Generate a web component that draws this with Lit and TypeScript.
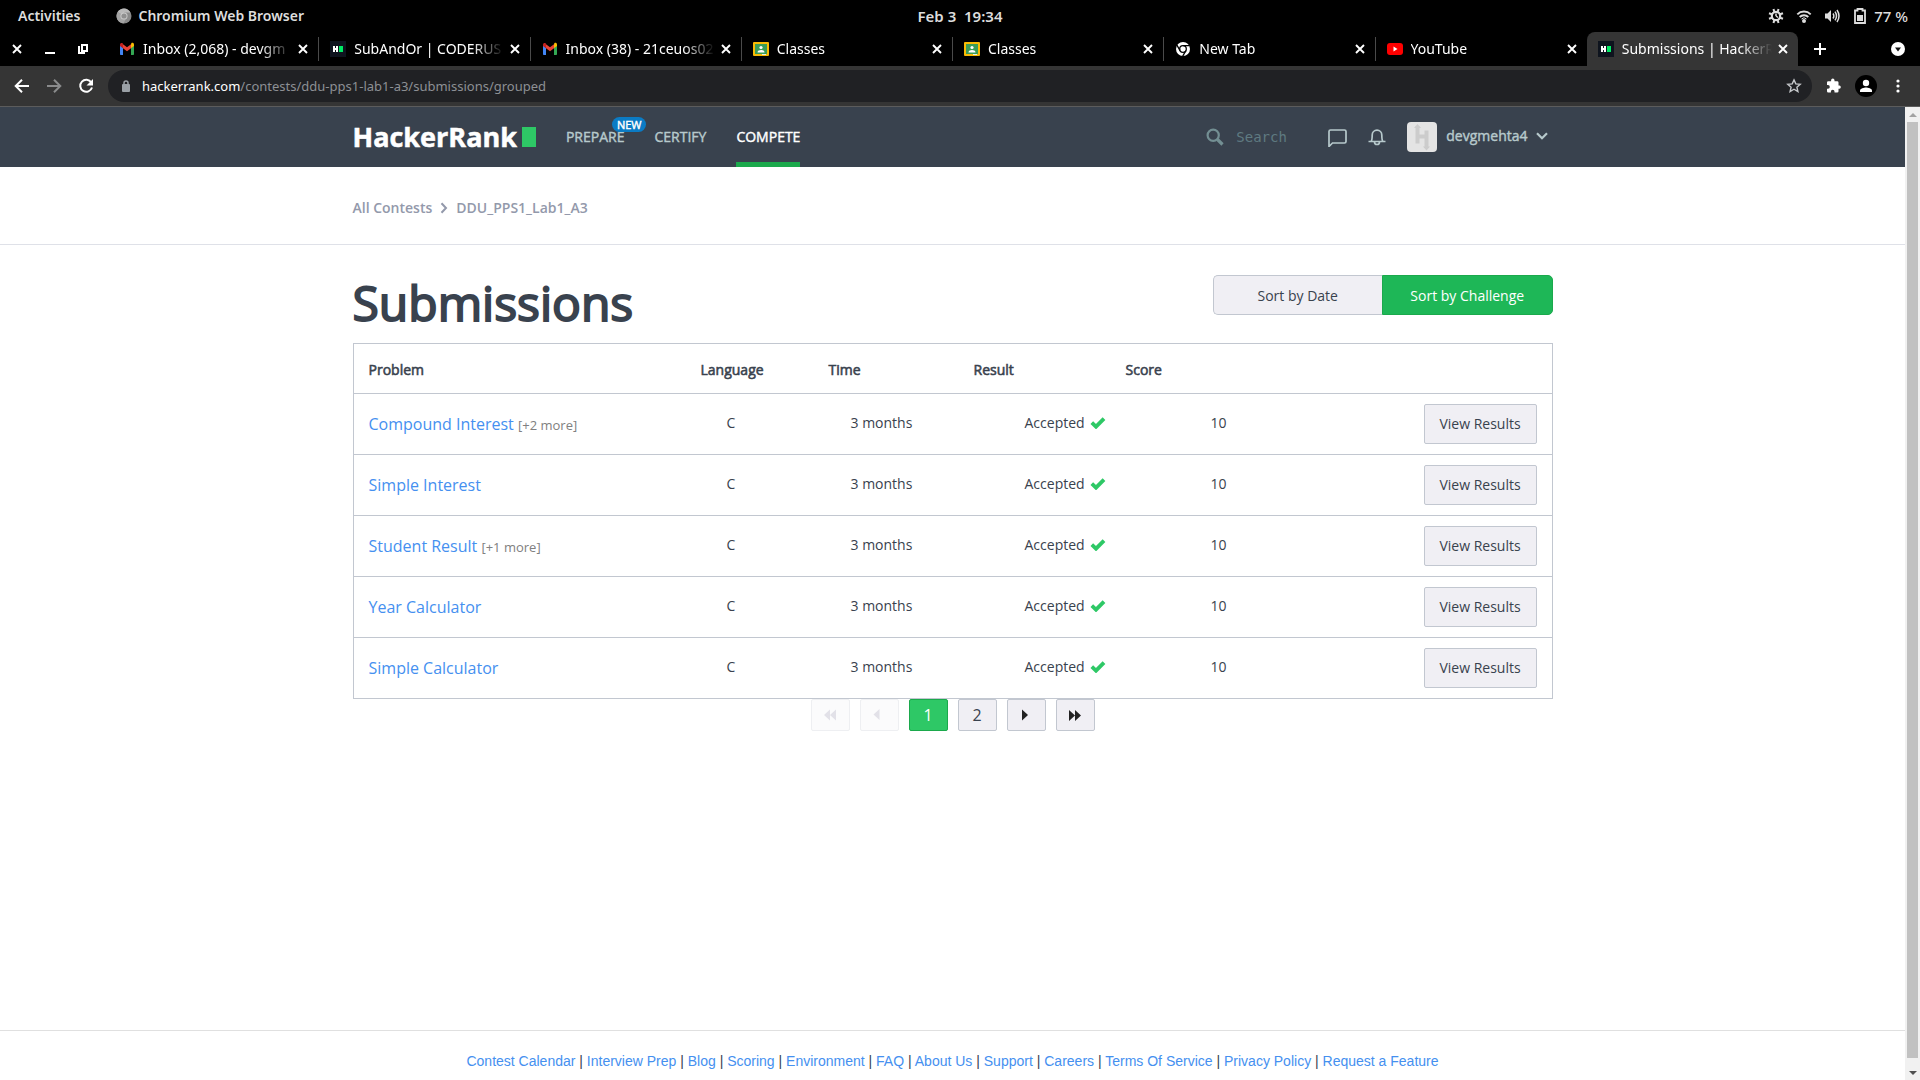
import { LitElement, html, svg, css, nothing, type TemplateResult } from "lit";
import { customElement, property, state } from "lit/decorators.js";
import { classMap } from "lit/directives/class-map.js";

interface Tab {
  title: string;
  icon: string;
  active?: boolean;
}

interface Submission {
  problem: string;
  more?: string;
}

const TABS: Tab[] = [
  { title: "Inbox (2,068) - devgm", icon: "gmail" },
  { title: "SubAndOr | CODERUS", icon: "hr" },
  { title: "Inbox (38) - 21ceuos02", icon: "gmail" },
  { title: "Classes", icon: "classroom" },
  { title: "Classes", icon: "classroom" },
  { title: "New Tab", icon: "chrome" },
  { title: "YouTube", icon: "youtube" },
  { title: "Submissions | HackerR", icon: "hr", active: true },
];

const SUBMISSIONS: Submission[] = [
  { problem: "Compound Interest", more: "[+2 more]" },
  { problem: "Simple Interest" },
  { problem: "Student Result", more: "[+1 more]" },
  { problem: "Year Calculator" },
  { problem: "Simple Calculator" },
];

const FOOTER = [
  "Contest Calendar", "Interview Prep", "Blog", "Scoring", "Environment", "FAQ",
  "About Us", "Support", "Careers", "Terms Of Service", "Privacy Policy", "Request a Feature",
];

const icon = (w: number, h: number, body: unknown, box = `0 0 ${w} ${h}`) =>
  html`<svg width=${w} height=${h} viewBox=${box} fill="none" aria-hidden="true">${body}</svg>`;

const ICONS: Record<string, () => TemplateResult> = {
  gmail: () => icon(16, 16, svg`
    <path d="M1 13.5V4.6l3 2.2v7.2H1.8a.8.8 0 0 1-.8-.8z" fill="#4285f4"/>
    <path d="M12 14V6.8l3-2.2v8.6a.8.8 0 0 1-.8.8z" fill="#34a853"/>
    <path d="M12 3.4v3.8l3-2.3V3.6c0-1.5-1.6-2.2-2.7-1.4z" fill="#fbbc04"/>
    <path d="M4 7.2V3.2l4 3 4-3v4l-4 3z" fill="#ea4335"/>
    <path d="M1 3.6v1.3l3 2.3V3.2l-.3-.9C2.6 1.5 1 2.2 1 3.6z" fill="#c5221f"/>`),
  hr: () => icon(16, 16, svg`
    <rect width="16" height="16" fill="#0e141e"/>
    <path d="M3 5h2v2h1V5h2v6H6V9H5v2H3z" fill="#fff"/><rect x="9" y="5" width="4" height="6" fill="#00ea64"/>`),
  classroom: () => icon(16, 16, svg`
    <rect y="1" width="16" height="14" rx="1" fill="#f9bb05"/><rect x="2" y="3" width="12" height="10" fill="#3b9c57"/>
    <circle cx="8" cy="6.5" r="1.6" fill="#fff"/><path d="M4.5 11.5c0-1.8 1.8-2.5 3.5-2.5s3.5.7 3.5 2.5z" fill="#fff"/>
    <path d="M9 13h4v1H9z" fill="#e8f0e8"/>`),
  chrome: () => icon(16, 16, svg`
    <circle cx="8" cy="8" r="7" fill="#fff"/><circle cx="8" cy="8" r="3.3" stroke="#000" stroke-width="1.3"/>
    <path d="M8 4.7h6.5M5.1 9.7L1.9 4.2M10.9 9.6l-3.2 5.5" stroke="#000" stroke-width="1.3"/>`),
  youtube: () => icon(16, 16, svg`
    <rect y="2" width="16" height="12" rx="3" fill="#f00"/><path d="M6.5 5.5v5l4-2.5z" fill="#fff"/>`),
  chromium: () => icon(16, 16, svg`
    <circle cx="8" cy="8" r="7.5" fill="#8a8a8a"/><path d="M8 8L1.6 4.1A7.5 7.5 0 0 1 14.5 4.5H8z" fill="#b9b9b9"/>
    <path d="M8 8L1.6 4.1A7.5 7.5 0 0 0 7.5 15.5L11 9z" fill="#a4a4a4"/>
    <circle cx="8" cy="8" r="3.5" fill="#ccc"/><circle cx="8" cy="8" r="2.6" fill="#8f8f8f"/>`),
  bug: () => icon(16, 16, svg`
    <circle cx="8" cy="8" r="4.2" stroke="#ddd" stroke-width="2.2"/><path d="M8 8V5.5M8 8l2 1.5" stroke="#ddd" stroke-width="1.5"/>
    <path d="M5.5 1l.8 3M10.5 1l-.8 3M5.500 15l.8-3M10.5 15l-.8-3M1 5.200l3 1.1M15 5.200l-3 1.1M1 10.800l3-1.1M15 10.800l-3-1.1" stroke="#ddd" stroke-width="2"/>`),
  wifi: () => icon(16, 16, svg`
    <circle cx="8" cy="13" r="2" fill="#ddd"/>
    <path d="M1.3 6.3a9.5 9.5 0 0 1 13.4 0M3.7 9a6 6 0 0 1 8.6 0" stroke="#ddd" stroke-width="1.9"/>
    <path d="M5.5 11a3.5 3.5 0 0 1 5 0" stroke="#ddd"/>`),
  volume: () => icon(16, 16, svg`
    <path d="M1 5.5h2.5L7 2v12l-3.5-3.5H1z" fill="#ddd"/>
    <path d="M9 5.5q1.7 2.500 0 5M11 3.6q3 4.400 0 8.800M13 2q4 6 0 12" stroke="#ddd" stroke-width="1.5"/>`),
  battery: () => icon(12, 16, svg`
    <path d="M3.5 2.5V1h5v1.5H11V15H1V2.5z" stroke="#ddd" stroke-width="1.8"/><path d="M3 7h6v6H3z" fill="#ddd"/>`),
  close: () => icon(10, 10, svg`<path d="M1 1l8 8M9 1l-8 8" stroke="#fff" stroke-width="1.9"/>`),
  minimize: () => icon(10, 10, svg`<path d="M0 9h10" stroke="#fff" stroke-width="2"/>`),
  restore: () => icon(10, 12, svg`<path d="M4 2h5v6H4zM1 3v7h6" stroke="#fff" stroke-width="2"/>`),
  plus: () => icon(12, 12, svg`<path d="M6 0v12M0 6h12" stroke="#fff" stroke-width="2"/>`),
  tabsearch: () => icon(14, 14, svg`<circle cx="7" cy="7" r="7" fill="#fff"/><path d="M4 5.5h6L7 9.5z" fill="#111"/>`),
  back: () => icon(16, 16, svg`<path d="M15 8H2M8 1.7L1.7 8 8 14.3" stroke="#fff" stroke-width="2"/>`),
  forward: () => icon(16, 16, svg`<path d="M1 8h13M8 1.7L14.3 8 8 14.3" stroke="#8a8b8c" stroke-width="2"/>`),
  reload: () => icon(16, 16, svg`<path d="M13.3 4.5A6 6 0 1 0 14 9.500" stroke="#fff" stroke-width="2"/><path d="M15 1v6.5H8.5z" fill="#fff"/>`),
  lock: () => icon(10, 14, svg`<rect x="1" y="5" width="8" height="8" rx="1" fill="#9aa0a6"/><path d="M3 6V4a2 2 0 0 1 4 0v2" stroke="#9aa0a6" stroke-width="1.5"/>`),
  star: () => icon(16, 16, svg`<path d="M8 1.9l1.8 4 4.4.4-3.3 2.9 1 4.3L8 11.2l-3.9 2.3 1-4.3-3.3-2.9 4.400-.4z" stroke="#c4c7ca" stroke-width="1.4"/>`),
  puzzle: () => icon(16, 16, svg`<path d="M13.5 7.5h-1v-3a1.3 1.3 0 0 0-1.3-1.3H8.5v-1a1.7 1.7 0 0 0-3.4 0v1H2.3A1.3 1.3 0 0 0 1 4.5v2.6h1a1.8 1.8 0 0 1 0 3.6H1v2.6a1.3 1.3 0 0 0 1.3 1.3h2.6v-1a1.8 1.8 0 0 1 3.6 0v1h2.7a1.3 1.3 0 0 0 1.3-1.3v-2.5h1a1.7 1.7 0 0 0 0-3.3z" fill="#fff"/>`),
  profile: () => icon(22, 22, svg`<circle cx="11" cy="11" r="11" fill="#000"/><circle cx="11" cy="8" r="3.2" fill="#fff"/><path d="M5 17v-1.5c0-2 4-3 6-3s6 1 6 3V17z" fill="#fff"/>`),
  dots: () => icon(4, 14, svg`<circle cx="2" cy="2" r="1.6" fill="#fff"/><circle cx="2" cy="7" r="1.6" fill="#fff"/><circle cx="2" cy="12" r="1.6" fill="#fff"/>`),
  search: () => icon(18, 18, svg`<circle cx="7.2" cy="7.2" r="5.6" stroke="#738f93" stroke-width="2.2"/><path d="M11.5 11.5l5 5" stroke="#738f93" stroke-width="3.2"/>`),
  chat: () => icon(20, 20, svg`<path d="M2 18.5V3.5A1.5 1.5 0 0 1 3.5 2h14A1.5 1.5 0 0 1 19 3.5v10a1.500 1.500 0 0 1-1.5 1.500H5.5z" stroke="#b7c9cc" stroke-width="1.7"/>`, "0 -1 20 20"),
  bell: () => icon(18, 20, svg`<path d="M.5 15.500h17M3.2 15.300c1-1.300 1-2.800 1-6.300a4.800 4.800 0 0 1 9.600 0c0 3.500 0 5 1 6.300M6.500 16a2.500 2.500 0 0 0 5 0" stroke="#b7c9cc" stroke-width="1.7"/>`, "0 1 18 20"),
  avatar: () => icon(30, 30, svg`<rect width="30" height="30" rx="4" fill="#e4e4e4"/><path d="M10.5 4v17.5M19.5 8.5V26M10 14.5h10" stroke="#ccc" stroke-width="4"/><path d="M7 6l3.5-4L14 6zM16 24.5l3.5 4 3.5-4z" fill="#ccc"/>`),
  chevron: () => icon(12, 8, svg`<path d="M1 1.2l5 5 5-5" stroke="#b7c9cc" stroke-width="2.2"/>`),
  crumb: () => icon(8, 12, svg`<path d="M1.5 1.2L6 6l-4.5 4.8" stroke="#9399ab" stroke-width="2"/>`),
  check: () => icon(16, 12, svg`<path d="M1.8 5.7l4.2 4L14 1.6" stroke="#2ec866" stroke-width="3.8"/>`),
  first: () => icon(12, 12, svg`<path d="M6 .5v11L0 6zM12 .5v11L6 6z" fill="currentColor"/>`),
  prev: () => icon(12, 12, svg`<path d="M6.500 0v11L.5 5.500z" fill="currentColor"/>`),
  next: () => icon(12, 12, svg`<path d="M2 .5v11L8 6z" fill="currentColor"/>`),
  last: () => icon(12, 12, svg`<path d="M0 1v11l6-5.5zM6 1v11l6-5.5z" fill="currentColor"/>`),
};

const reset = css`
  * { box-sizing: border-box; }
  svg { display: block; flex: none; }
  a { color: inherit; text-decoration: none; }
  button {
    display: flex; align-items: center; justify-content: center;
    margin: 0; padding: 0; border: 0; background: none;
    color: inherit; font: inherit; white-space: nowrap;
  }
`;

@customElement("browser-chrome")
export class BrowserChrome extends LitElement {
  static styles = [reset, css`
    :host { display: block; font: 14px/20px "Noto Sans", sans-serif; color: #fff; }
    .desktop {
      display: grid; grid-template-columns: 1fr auto 1fr; align-items: center;
      height: 32px; padding: 0 12px; background: #000; color: #ddd; font-weight: 600;
    }
    .left, .right, .app { display: flex; align-items: center; }
    .left { gap: 36px; padding-left: 6px; }
    .app { gap: 6px; }
    .clock, .right { font-size: 15px; }
    .right { justify-content: flex-end; gap: 12px; font-weight: 500; }
    .power { display: flex; align-items: center; gap: 8px; padding-left: 2px; }
    .strip { display: flex; height: 34px; background: #000; }
    .window { display: flex; width: 108px; }
    .window button { width: 33px; }
    .tabs { display: flex; flex: 0 1 1690px; min-width: 0; }
    .tab { display: flex; align-items: center; flex: 1 1 0; min-width: 0; padding-left: 11px; }
    .name { display: flex; flex: 1; min-width: 0; gap: 8px; justify-content: flex-start; }
    .title {
      flex: 1; overflow: hidden; text-align: left;
      -webkit-mask-image: linear-gradient(to left, transparent, #000 32px);
      mask-image: linear-gradient(to left, transparent, #000 32px);
    }
    .shut { width: 22px; height: 20px; margin-right: 4px; }
    .sep { width: 1px; height: 24px; background: #4a4a4a; }
    .active { background: #353535; border-radius: 8px 8px 0 0; }
    .new { width: 44px; }
    .find { margin-left: auto; width: 44px; }
    .toolbar {
      display: flex; align-items: center; height: 41px; padding: 0 6px;
      background: #353535; border-bottom: 1px solid #5c5c5c;
    }
    .toolbar button { width: 32px; height: 32px; }
    .address {
      display: flex; align-items: center; gap: 11px; flex: 1;
      height: 32px; margin: 0 6px; padding: 0 2px 0 13px;
      border-radius: 16px; background: #202124; font-size: 13px;
    }
    .url { flex: 1; color: #8d9094; }
    .host { color: #fff; }
  `];

  render() {
    return html`
      <div class="desktop">
        <div class="left"><span>Activities</span><span class="app">${ICONS.chromium()}Chromium Web Browser</span></div>
        <div class="clock">Feb 3&nbsp; 19:34</div>
        <div class="right">${ICONS.bug()}${ICONS.wifi()}${ICONS.volume()}<span class="power">${ICONS.battery()}77 %</span></div>
      </div>
      <div class="strip">
        <div class="window">
          <button aria-label="Close window">${ICONS.close()}</button>
          <button aria-label="Minimize">${ICONS.minimize()}</button>
          <button aria-label="Restore">${ICONS.restore()}</button>
        </div>
        <div class="tabs">
          ${TABS.map((t, i) => html`
            <div class=${classMap({ tab: true, active: !!t.active })}>
              <button class="name">${ICONS[t.icon]()}<span class="title">${t.title}</span></button>
              <button class="shut" aria-label="Close tab">${ICONS.close()}</button>
              ${i < TABS.length - 2 ? html`<span class="sep"></span>` : nothing}
            </div>`)}
        </div>
        <button class="new" aria-label="New tab">${ICONS.plus()}</button>
        <button class="find" aria-label="Search tabs">${ICONS.tabsearch()}</button>
      </div>
      <div class="toolbar">
        <button aria-label="Back">${ICONS.back()}</button>
        <button aria-label="Forward">${ICONS.forward()}</button>
        <button aria-label="Reload">${ICONS.reload()}</button>
        <div class="address">
          ${ICONS.lock()}
          <span class="url"><span class="host">hackerrank.com</span>/contests/ddu-pps1-lab1-a3/submissions/grouped</span>
          <button aria-label="Bookmark">${ICONS.star()}</button>
        </div>
        <button aria-label="Extensions">${ICONS.puzzle()}</button>
        <button aria-label="Profile">${ICONS.profile()}</button>
        <button aria-label="Menu">${ICONS.dots()}</button>
      </div>`;
  }
}

@customElement("site-header")
export class SiteHeader extends LitElement {
  static styles = [reset, css`
    :host { display: block; background: #39424e; color: #b7c9cc; font: 14px/20px "Open Sans", sans-serif; }
    .inner { display: flex; align-items: center; width: 100%; max-width: 1200px; height: 60px; margin: 0 auto; }
    .logo {
      display: flex; align-items: center; gap: 5px; margin-right: 30px;
      color: #fff; font-size: 27px; line-height: 32px; font-weight: 700; -webkit-text-stroke: 0.02em;
    }
    .block { width: 14px; height: 20px; background: #2ec866; }
    .nav { display: flex; align-self: stretch; gap: 30px; }
    .item {
      position: relative; display: flex; align-items: center;
      border-bottom: 5px solid transparent; padding-top: 5px;
      -webkit-text-stroke: 0.03em;
    }
    .current { color: #fff; border-color: #1ba94c; }
    .badge {
      position: absolute; top: 10px; right: -22px; padding: 0 5px; border-radius: 8px;
      background: #0b7bc4; color: #fff; font-size: 11px; line-height: 15px;
    }
    .search { display: flex; align-items: center; gap: 12px; margin-left: auto; }
    .field {
      width: 79px; padding: 0; border: 0; outline: 0; background: none;
      font: 14px/20px "DejaVu Sans Mono", monospace; color: #b7c9cc;
    }
    .field::placeholder { color: #5f7a81; opacity: 1; }
    .tools { display: flex; align-items: center; gap: 21px; margin: 0 21px 0 12px; }
    .user { display: flex; align-items: center; gap: 9px; margin-right: 5px; -webkit-text-stroke: 0.03em; }
    .account { display: flex; align-items: center; gap: 8px; padding-bottom: 2px; }
  `];

  render() {
    return html`
      <header class="inner">
        <a class="logo" href="#">HackerRank<span class="block"></span></a>
        <nav class="nav">
          <a class="item" href="#prepare">PREPARE<span class="badge">NEW</span></a>
          <a class="item" href="#certify">CERTIFY</a>
          <a class="item current" href="#compete">COMPETE</a>
        </nav>
        <label class="search">${ICONS.search()}<input class="field" type="text" placeholder="Search" aria-label="Search" /></label>
        <div class="tools">
          <button aria-label="Messages">${ICONS.chat()}</button>
          <button aria-label="Notifications">${ICONS.bell()}</button>
        </div>
        <button class="user">${ICONS.avatar()}<span class="account">devgmehta4${ICONS.chevron()}</span></button>
      </header>`;
  }
}

@customElement("submissions-table")
export class SubmissionsTable extends LitElement {
  static styles = [reset, css`
    :host { display: block; border: 1px solid #c2c7d0; border-bottom: 0; }
    .table { width: 100%; border-collapse: separate; border-spacing: 0; table-layout: fixed; }
    .problem { width: 347px; }
    .language { width: 128px; }
    .time { width: 145px; }
    .result { width: 152px; }
    .action { width: 136px; }
    th, td { padding: 0; border-bottom: 1px solid #c2c7d0; text-align: left; }
    th { height: 50px; padding-top: 2px; font-weight: 400; -webkit-text-stroke: 0.04em; }
    td { height: 61px; padding-bottom: 2px; }
    td.c-problem, th:first-child { padding-left: 15px; }
    td.c-problem { font-size: 16px; padding-bottom: 0; }
    td.c-language { padding-left: 26px; }
    td.c-time { padding-left: 22px; }
    td.c-result { padding-left: 51px; }
    td.c-score { padding-left: 85px; }
    td.c-action { padding: 0 15px 0 0; }
    .link { color: #4590f0; }
    .more { color: #808080; font-size: 13px; }
    .status { display: flex; align-items: center; gap: 5px; }
    .view {
      display: block; height: 40px; border: 1px solid #c2c7d0; border-radius: 2px;
      background: #f0eff4; line-height: 38px; text-align: center; margin-left: 8px;
    }
  `];

  @property({ attribute: false }) rows: Submission[] = [];

  render() {
    return html`
      <table class="table">
        <colgroup>
          <col class="problem" /><col class="language" /><col class="time" /><col class="result" /><col /><col class="action" />
        </colgroup>
        <thead>
          <tr><th>Problem</th><th>Language</th><th>Time</th><th>Result</th><th>Score</th><th></th></tr>
        </thead>
        <tbody>
          ${this.rows.map((r) => html`
            <tr>
              <td class="c-problem"><a class="link" href="#">${r.problem}</a>${r.more ? html` <span class="more">${r.more}</span>` : nothing}</td>
              <td class="c-language">C</td>
              <td class="c-time">3 months</td>
              <td class="c-result"><span class="status">Accepted ${ICONS.check()}</span></td>
              <td class="c-score">10</td>
              <td class="c-action"><a class="view" href="#">View Results</a></td>
            </tr>`)}
        </tbody>
      </table>`;
  }
}

@customElement("app-root")
export class AppRoot extends LitElement {
  static styles = [reset, css`
    :host {
      display: flex; flex-direction: column; min-height: 100vh; background: #fff;
      color: #39424e; font: 14px/20px "Open Sans", sans-serif;
    }
    .view { display: flex; flex: 1; }
    .page { display: flex; flex-direction: column; flex: 1; min-width: 0; }
    .crumbs { border-bottom: 1px solid #dfe1e8; }
    .wrap { width: 100%; max-width: 1200px; margin: 0 auto; }
    .trail {
      display: flex; align-items: center; gap: 8px; height: 77px; padding-top: 4px;
      color: #9399ab; font-weight: 600;
    }
    .main { flex: 1; }
    .head { display: flex; justify-content: space-between; align-items: flex-start; padding-top: 30px; }
    .heading { margin: 0; padding-bottom: 12px; font-size: 48px; line-height: 56px; font-weight: 400; -webkit-text-stroke: 0.04em; }
    .sort { display: flex; width: 340px; }
    .choice { flex: 1; height: 40px; padding-top: 2px; border: 1px solid #c2c7d0; background: #f0eff4; border-radius: 5px 0 0 5px; border-right: 0; }
    .chosen { border: 1px solid #1ba94c; border-radius: 0 5px 5px 0; background: #1eb757; color: #fff; }
    .pager { display: flex; justify-content: center; gap: 10px; font-size: 16px; }
    .step { width: 39px; height: 32px; border: 1px solid #c2c7d0; border-radius: 2px; background: #f0eff4; }
    .arrow { color: #222; }
    .here { border-color: #1ba94c; background: #2ec866; color: #fff; }
    .step:disabled { border-color: #eeeff2; background: #fbfbfc; color: #e2e1e8; }
    .footer {
      padding: 20px 0 9px; border-top: 1px solid #e0e0e0; text-align: center;
      font-family: "Liberation Sans", Arial, sans-serif;
    }
    .footer a { color: #4590f0; }
    .scroll { display: flex; flex-direction: column; align-items: center; width: 15px; background: #f1f1f1; }
    .end { display: flex; align-items: center; justify-content: center; height: 15px; }
    .thumb { width: 11px; flex: 1; margin-bottom: 7px; background: #c1c1c1; }
  `];

  @state() private sort = "challenge";

  render() {
    return html`
      <browser-chrome></browser-chrome>
      <div class="view">
        <div class="page">
          <site-header></site-header>
          <div class="crumbs">
            <nav class="wrap trail"><a href="#">All Contests</a>${ICONS.crumb()}<a href="#">DDU_PPS1_Lab1_A3</a></nav>
          </div>
          <main class="wrap main">
            <div class="head">
              <h1 class="heading">Submissions</h1>
              <div class="sort">
                <button class="choice" aria-pressed=${this.sort === "date"}>Sort by Date</button>
                <button class="choice chosen" aria-pressed=${this.sort === "challenge"}>Sort by Challenge</button>
              </div>
            </div>
            <submissions-table .rows=${SUBMISSIONS}></submissions-table>
            <nav class="pager">
              <button class="step" disabled aria-label="First page">${ICONS.first()}</button>
              <button class="step" disabled aria-label="Previous page">${ICONS.prev()}</button>
              <button class="step here">1</button>
              <button class="step">2</button>
              <button class="step arrow" aria-label="Next page">${ICONS.next()}</button>
              <button class="step arrow" aria-label="Last page">${ICONS.last()}</button>
            </nav>
          </main>
          <footer class="footer">${FOOTER.map((f, i) => html`${i ? " | " : ""}<a href="#">${f}</a>`)}</footer>
        </div>
        <div class="scroll">
          <div class="end">${icon(8, 4, svg`<path d="M0 4h8L4 0z" fill="#a3a3a3"/>`)}</div>
          <div class="thumb"></div>
          <div class="end">${icon(8, 4, svg`<path d="M0 0h8L4 4z" fill="#505050"/>`)}</div>
        </div>
      </div>`;
  }
}
